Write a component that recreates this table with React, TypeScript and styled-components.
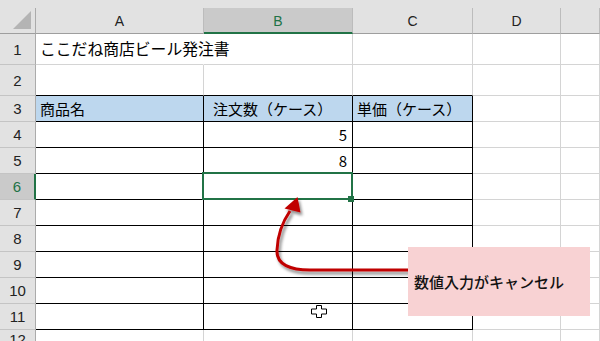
import React from "react";
import styled, { createGlobalStyle } from "styled-components";

const GlobalStyle = createGlobalStyle`
  html, body { margin: 0; padding: 0; background: #fff; }
  body { font-family: "Noto Sans CJK JP", "Noto Sans", sans-serif; }
  * { box-sizing: border-box; }
`;

const GRID = "#d4d4d4";
const BLACK = "#000";
const GREEN = "#217346";
const HEAD_BG = "#e2e2e2";
const HEAD_SEL = "#cacaca";

const Page = styled.div`
  position: relative;
  width: 600px;
  height: 341px;
  overflow: hidden;
  background: #fff;
`;

const TopStrip = styled.div`
  height: 8px;
  background: ${HEAD_BG};
`;

const Grid = styled.div`
  display: grid;
  grid-template-columns: 36px 168px 149px 120px 88px 39px;
  grid-template-rows: 26px 31px 31px repeat(9, 26px) 20px;
`;

const Corner = styled.div`
  display: flex;
  align-items: flex-start;
  justify-content: flex-end;
  padding: 3px 3px 0 0;
  background: ${HEAD_BG};
  border-right: 1px solid #ababab;
  border-bottom: 1px solid #9e9e9e;
`;

const ColHeader = styled.div<{ $sel?: boolean }>`
  display: flex;
  align-items: center;
  justify-content: center;
  background: ${(p) => (p.$sel ? HEAD_SEL : HEAD_BG)};
  border-right: 1px solid #bcbcbc;
  border-bottom: ${(p) => (p.$sel ? `2px solid ${GREEN}` : "1px solid #9e9e9e")};
  font-family: "Liberation Sans", Arial, sans-serif;
  font-size: 14px;
  color: ${(p) => (p.$sel ? GREEN : "#222")};
  padding-top: 1px;
`;

const RowHeader = styled.div<{ $sel?: boolean }>`
  display: flex;
  align-items: center;
  justify-content: center;
  background: ${(p) => (p.$sel ? HEAD_SEL : HEAD_BG)};
  border-right: ${(p) => (p.$sel ? `2px solid ${GREEN}` : "1px solid #ababab")};
  border-bottom: 1px solid #c4c4c4;
  font-family: "Liberation Sans", Arial, sans-serif;
  font-size: 15px;
  color: ${(p) => (p.$sel ? GREEN : "#222")};
`;

const Cell = styled.div<{
  $right: string;
  $bottom: string;
  $bg?: string;
  $align?: "left" | "right";
  $pad?: number;
  $size?: number;
}>`
  position: relative;
  display: flex;
  align-items: center;
  justify-content: ${(p) => (p.$align === "right" ? "flex-end" : "flex-start")};
  padding: 0 ${(p) => (p.$align === "right" ? 5 : 0)}px 1px ${(p) => p.$pad ?? 4}px;
  background: ${(p) => p.$bg ?? "transparent"};
  border-right: 1px solid ${(p) => p.$right};
  border-bottom: 1px solid ${(p) => p.$bottom};
  font-size: ${(p) => p.$size ?? 15}px;
  color: #000;
  white-space: nowrap;
  overflow: visible;
`;

const ActiveFrame = styled.div`
  position: absolute;
  top: -2px;
  left: -2px;
  right: -1px;
  bottom: -1px;
  border: 2px solid ${GREEN};
  z-index: 2;
`;

const FillHandle = styled.div`
  position: absolute;
  right: -2px;
  bottom: -3px;
  width: 6px;
  height: 6px;
  background: ${GREEN};
  z-index: 3;
`;

const Overlay = styled.svg`
  position: absolute;
  left: 0;
  top: 0;
  pointer-events: none;
  z-index: 5;
`;

const Callout = styled.div`
  position: absolute;
  left: 408px;
  top: 247px;
  width: 182px;
  height: 69px;
  background: #f8d2d3;
  display: flex;
  align-items: center;
  padding-left: 6px;
  font-size: 15px;
  font-weight: 500;
  color: #111;
  z-index: 6;
`;

const Cursor = styled.svg`
  position: absolute;
  left: 311px;
  top: 305px;
  z-index: 6;
`;

const LETTERS = ["A", "B", "C", "D", ""];

type CellData = { text?: string; align?: "left" | "right"; pad?: number; size?: number };

const content: Record<string, CellData> = {
  "1-0": { text: "ここだね商店ビール発注書", size: 15.8 },
  "3-0": { text: "商品名" },
  "3-1": { text: "注文数（ケース）", pad: 9 },
  "3-2": { text: "単価（ケース）" },
  "4-1": { text: "5", align: "right" },
  "5-1": { text: "8", align: "right" },
};

export default function App() {
  const rows = Array.from({ length: 12 }, (_, i) => i + 1);
  return (
    <Page>
      <GlobalStyle />
      <TopStrip />
      <Grid>
        <Corner>
          <svg width="19" height="19" viewBox="0 0 19 19">
            <polygon points="18,0 18,18 0,18" fill="#b4b4b4" />
          </svg>
        </Corner>
        {LETTERS.map((l, c) => (
          <ColHeader key={c} $sel={c === 1}>
            {l}
          </ColHeader>
        ))}
        {rows.map((r) => (
          <React.Fragment key={r}>
            <RowHeader $sel={r === 6}>{r}</RowHeader>
            {LETTERS.map((_, c) => {
              const inTable = r >= 3 && r <= 11 && c <= 2;
              const right = r === 1 && c === 0 ? "transparent" : inTable ? BLACK : GRID;
              const bottom = c <= 2 && r >= 2 && r <= 11 ? BLACK : GRID;
              const d = content[`${r}-${c}`];
              const active = r === 6 && c === 1;
              return (
                <Cell
                  key={c}
                  $right={right}
                  $bottom={bottom}
                  $bg={r === 3 && c <= 2 ? "#bdd7ee" : undefined}
                  $align={d?.align}
                  $pad={d?.pad}
                  $size={d?.size}
                >
                  {d?.text}
                  {active && (
                    <>
                      <ActiveFrame />
                      <FillHandle />
                    </>
                  )}
                </Cell>
              );
            })}
          </React.Fragment>
        ))}
      </Grid>
      <Overlay width="600" height="341" viewBox="0 0 600 341">
        <defs>
          <filter id="sh" x="-20%" y="-20%" width="150%" height="150%">
            <feDropShadow dx="2" dy="3" stdDeviation="1.6" floodColor="#000" floodOpacity="0.45" />
          </filter>
        </defs>
        <g filter="url(#sh)">
          <path
            d="M409,270 L310,270 C291,270 276,265 277,250 C277.5,237 281,224 290,211"
            fill="none"
            stroke="#c00000"
            strokeWidth="3"
          />
          <polygon points="297.5,197 284.5,208.5 300.5,212.5" fill="#c00000" />
        </g>
      </Overlay>
      <Callout>数値入力がキャンセル</Callout>
      <Cursor width="16" height="13" viewBox="0 0 16 13">
        <path
          d="M5.5,0.5 H10.5 V4 H15.5 V9 H10.5 V12.5 H5.5 V9 H0.5 V4 H5.5 Z"
          fill="#fff"
          stroke="#000"
          strokeWidth="1"
        />
      </Cursor>
    </Page>
  );
}
